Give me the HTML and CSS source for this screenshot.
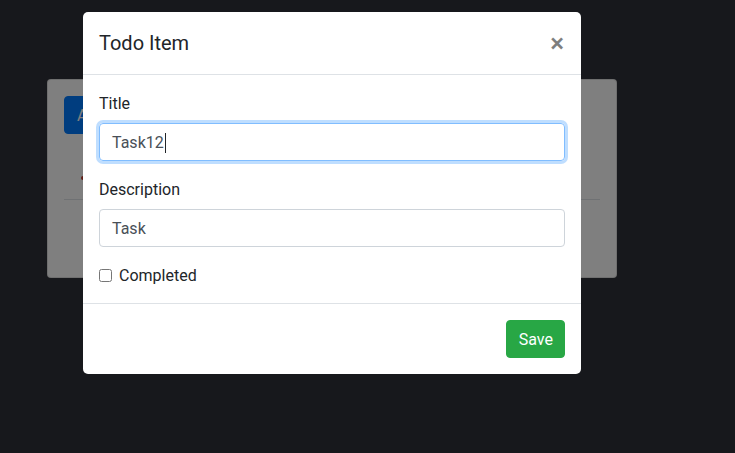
FILE: index.html
```html
<!DOCTYPE html>
<html lang="en">
<head>
<meta charset="utf-8">
<title>Todo</title>
<link rel="stylesheet" href="styles.css">
</head>
<body>
<main class="page">
  <section class="card">
    <button class="btn btn-primary">Add Todo</button>
    <div class="todo-row">
      <span class="todo-dot"></span>
    </div>
    <hr class="divider">
  </section>
</main>

<div class="backdrop"></div>

<div class="modal">
  <div class="modal-header">
    <h5 class="modal-title">Todo Item</h5>
    <button class="close" type="button">&times;</button>
  </div>
  <div class="modal-body">
    <div class="form-group">
      <div class="label-row"><label class="label">Title</label></div>
      <div class="form-control focused"><span>Task12</span><span class="caret"></span></div>
    </div>
    <div class="form-group">
      <div class="label-row"><label class="label">Description</label></div>
      <div class="form-control"><span>Task</span></div>
    </div>
    <label class="form-check">
      <input type="checkbox" class="check">
      <span>Completed</span>
    </label>
  </div>
  <div class="modal-footer">
    <button class="btn btn-success">Save</button>
  </div>
</div>
</body>
</html>
```

FILE: styles.css
```css
* { box-sizing: border-box; }

html, body {
  margin: 0;
  height: 100%;
}

body {
  background: #2e3038;
  font-family: Roboto, "Liberation Sans", sans-serif;
  font-size: 16px;
  line-height: 24px;
  color: #212529;
}

.page {
  padding: 79px 0 0 47px;
}

.card {
  width: 570px;
  height: 199px;
  background: #fff;
  border: 1px solid rgba(0,0,0,.125);
  border-radius: 4px;
  padding: 16px;
}

.btn {
  font-family: inherit;
  font-size: 16px;
  line-height: 24px;
  height: 38px;
  padding: 7px 12px 5px;
  border: 1px solid transparent;
  border-radius: 4px;
  color: #fff;
  cursor: pointer;
}

.btn-primary {
  background: #007bff;
  border-color: #007bff;
}

.btn-success {
  background: #28a745;
  border-color: #28a745;
  margin: 4px;
  padding-left: 12px;
  padding-right: 11px;
}

.todo-row {
  height: 65px;
  padding: 42px 0 0 17px;
}

.todo-dot {
  display: block;
  width: 4px;
  height: 4px;
  border-radius: 2px;
  background: #c0392b;
}

.divider {
  margin: 0;
  border: 0;
  border-top: 1px solid #dee2e6;
}

.backdrop {
  position: fixed;
  inset: 0;
  background: rgba(0,0,0,.5);
}

.modal {
  position: fixed;
  top: 12px;
  left: 83px;
  width: 498px;
  background: #fff;
  border-radius: 5px;
}

.modal-header {
  display: flex;
  align-items: center;
  justify-content: space-between;
  height: 63px;
  padding: 16px;
  border-bottom: 1px solid #dee2e6;
}

.modal-title {
  margin: 0;
  padding-top: 1px;
  height: 30px;
  font-size: 20px;
  line-height: 29px;
  font-weight: 400;
  color: #212529;
}

.close {
  background: none;
  border: 0;
  padding: 0 1px 0 0;
  height: 30px;
  font-family: Roboto, sans-serif;
  font-size: 26px;
  line-height: 30px;
  font-weight: 500;
  color: #000;
  opacity: .5;
}

.modal-body {
  padding: 16px;
}

.form-group {
  margin-bottom: 16px;
}

.label-row {
  display: flex;
  height: 24px;
  margin-bottom: 8px;
  padding-top: 1px;
}

.label {
  line-height: 23px;
  color: #212529;
}

.form-control {
  height: 38px;
  padding: 7px 12px 5px;
  border: 1px solid #ced4da;
  border-radius: 4px;
  color: #495057;
  display: flex;
  align-items: center;
}

.form-control.focused {
  border-color: #80bdff;
  box-shadow: 0 0 0 3px rgba(0,123,255,.25);
}

.caret {
  display: inline-block;
  width: 1px;
  height: 20px;
  background: #212529;
  margin-left: 1px;
}

.form-check {
  display: flex;
  align-items: center;
  height: 24px;
  padding-top: 1px;
}

.check {
  width: 13px;
  height: 13px;
  margin: 0 7px 0 0;
}

.modal-footer {
  display: flex;
  justify-content: flex-end;
  padding: 12px;
  border-top: 1px solid #dee2e6;
}
```
